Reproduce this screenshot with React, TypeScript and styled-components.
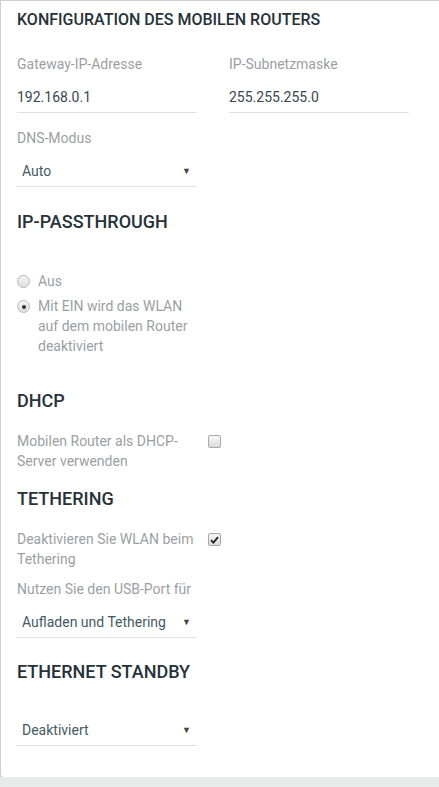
import styled, { createGlobalStyle } from "styled-components";

const GlobalStyle = createGlobalStyle`
  html, body {
    margin: 0;
    padding: 0;
    background: #e9eaea;
    font-family: Roboto, "Noto Sans", Arial, sans-serif;
  }
`;

const Card = styled.div`
  width: 460px;
  height: 777px;
  box-sizing: border-box;
  background: #fff;
  border-top: 1px solid #cfcfcf;
  border-left: 1px solid #cfcfcf;
  border-bottom-left-radius: 3px;
  box-shadow: 0 2px 3px rgba(0, 0, 0, 0.18);
  padding: 9px 0 0 16px;
`;

const Title = styled.h1`
  margin: 0 0 24px;
  font-size: 16px;
  line-height: 20px;
  font-weight: 500;
  color: #263238;
  text-transform: uppercase;
`;

const Heading = styled.h2<{ $after: number }>`
  margin: 0 0 ${(p) => p.$after}px;
  font-size: 18px;
  line-height: 24px;
  font-weight: 500;
  color: #263238;
  text-transform: uppercase;
`;

const Section = styled.section<{ $before: number }>`
  margin-top: ${(p) => p.$before}px;
`;

const Row = styled.div`
  display: flex;
  gap: 32px;
`;

const Field = styled.div`
  width: 180px;
  display: flex;
  flex-direction: column;
`;

const Label = styled.div`
  font-size: 14px;
  line-height: 20px;
  color: #9a9fa4;
`;

const Value = styled.div`
  margin-top: 8px;
  height: 30px;
  line-height: 30px;
  font-size: 14px;
  color: #37474f;
  border-bottom: 1px solid #e0e0e0;
`;

const Select = styled.div<{ $flush?: boolean }>`
  margin-top: ${(p) => (p.$flush ? 0 : 8)}px;
  width: 180px;
  height: 31px;
  box-sizing: border-box;
  display: flex;
  align-items: center;
  justify-content: space-between;
  padding: 0 0 0 5px;
  font-size: 14px;
  color: #455a64;
  border-bottom: 1px solid #e0e0e0;
`;

const Arrow = styled.span`
  font-size: 9px;
  color: #444;
  margin-right: 6px;
`;

const RadioList = styled.div`
  display: flex;
  flex-direction: column;
  gap: 5px;
  width: 180px;
`;

const RadioRow = styled.label`
  display: flex;
  gap: 8px;
  font-size: 14px;
  line-height: 20px;
  color: #9a9fa4;
`;

const RadioDot = styled.span<{ $on?: boolean }>`
  flex: none;
  width: 11px;
  height: 11px;
  margin-top: 4px;
  border-radius: 50%;
  border: 1px solid #b9b9b9;
  background: linear-gradient(#f4f4f4, #dedede);
  display: flex;
  align-items: center;
  justify-content: center;
  &::after {
    content: "";
    width: 4px;
    height: 4px;
    border-radius: 50%;
    background: ${(p) => (p.$on ? "#333" : "transparent")};
  }
`;

const CheckRow = styled.div`
  display: flex;
  gap: 11px;
  align-items: flex-start;
`;

const CheckText = styled(Label)`
  width: 180px;
`;

const Box = styled.span`
  flex: none;
  width: 11px;
  height: 11px;
  margin-top: 4px;
  border: 1px solid #a9a9a9;
  border-radius: 2px;
  background: linear-gradient(#f6f6f6, #dcdcdc);
  display: flex;
  align-items: center;
  justify-content: center;
`;

const Gap = styled.div<{ $h: number }>`
  height: ${(p) => p.$h}px;
`;

const Check = () => (
  <svg width="9" height="8" viewBox="0 0 9 8">
    <path d="M1 4.2 L3.4 6.6 L8 1.2" fill="none" stroke="#222" strokeWidth="1.8" />
  </svg>
);

export default function App() {
  return (
    <>
      <GlobalStyle />
      <Card>
        <Title>Konfiguration des mobilen Routers</Title>
        <Row>
          <Field>
            <Label>Gateway-IP-Adresse</Label>
            <Value>192.168.0.1</Value>
          </Field>
          <Field>
            <Label>IP-Subnetzmaske</Label>
            <Value>255.255.255.0</Value>
          </Field>
        </Row>
        <Section $before={15}>
          <Label>DNS-Modus</Label>
          <Select>
            Auto<Arrow>▼</Arrow>
          </Select>
        </Section>

        <Section $before={23}>
          <Heading $after={37}>IP-Passthrough</Heading>
          <RadioList>
            <RadioRow>
              <RadioDot />
              Aus
            </RadioRow>
            <RadioRow>
              <RadioDot $on />
              Mit EIN wird das WLAN auf dem mobilen Router deaktiviert
            </RadioRow>
          </RadioList>
        </Section>

        <Section $before={33}>
          <Heading $after={18}>DHCP</Heading>
          <CheckRow>
            <CheckText>Mobilen Router als DHCP-Server verwenden</CheckText>
            <Box />
          </CheckRow>
        </Section>

        <Section $before={16}>
          <Heading $after={18}>Tethering</Heading>
          <CheckRow>
            <CheckText>Deaktivieren Sie WLAN beim Tethering</CheckText>
            <Box>
              <Check />
            </Box>
          </CheckRow>
          <Gap $h={10} />
          <Label>Nutzen Sie den USB-Port für</Label>
          <Select>
            Aufladen und Tethering<Arrow>▼</Arrow>
          </Select>
        </Section>

        <Section $before={22}>
          <Heading $after={31}>Ethernet Standby</Heading>
          <Select $flush>
            Deaktiviert<Arrow>▼</Arrow>
          </Select>
        </Section>
      </Card>
    </>
  );
}
